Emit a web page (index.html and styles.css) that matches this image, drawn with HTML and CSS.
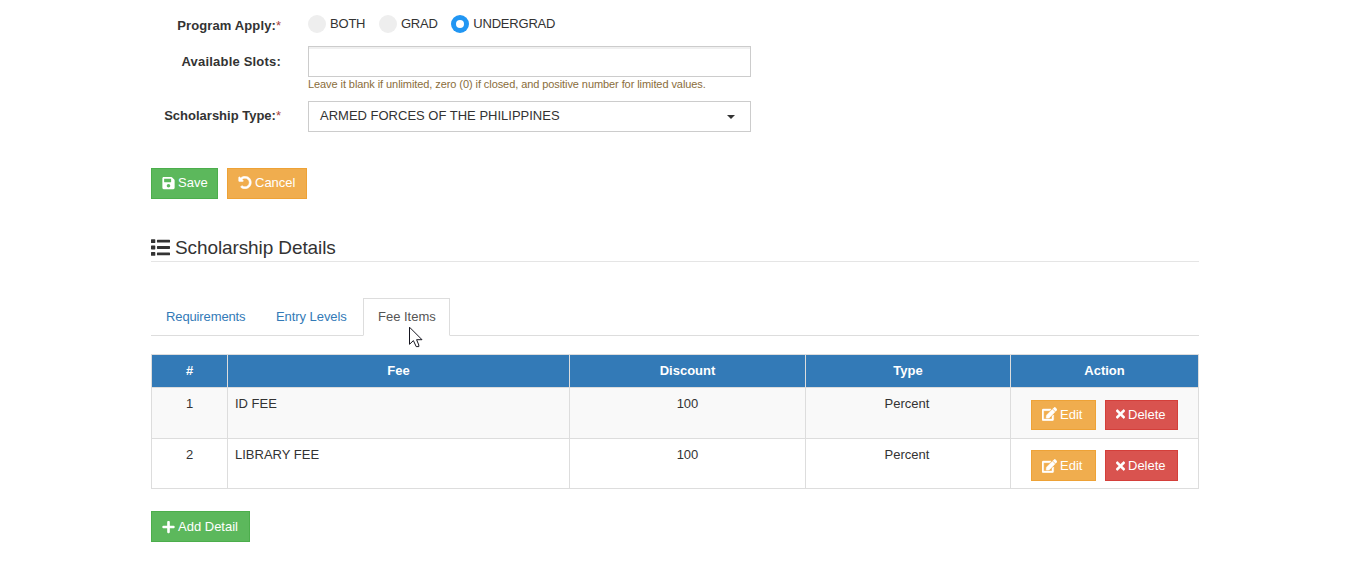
FILE: index.html
```html
<!DOCTYPE html>
<html lang="en">
<head>
  <meta charset="UTF-8" />
  <meta name="viewport" content="width=device-width, initial-scale=1" />
  <title>Scholarship Details</title>
  <link rel="stylesheet" href="styles.css">
</head>
<body>
  <!-- Icons -->
  <svg class="icon-defs">
    <symbol id="i-save" viewBox="0 0 448 512"><path d="M433.941 129.941l-83.882-83.882A48 48 0 0 0 316.118 32H48C21.49 32 0 53.49 0 80v352c0 26.51 21.49 48 48 48h352c26.51 0 48-21.49 48-48V163.882a48 48 0 0 0-14.059-33.941zM224 416c-35.346 0-64-28.654-64-64 0-35.346 28.654-64 64-64s64 28.654 64 64c0 35.346-28.654 64-64 64zm96-304.52V212c0 6.627-5.373 12-12 12H76c-6.627 0-12-5.373-12-12V108c0-6.627 5.373-12 12-12h228.52c3.183 0 6.235 1.264 8.485 3.515l3.48 3.48A11.996 11.996 0 0 1 320 111.48z"/></symbol>
    <symbol id="i-undo" viewBox="0 0 512 512"><path d="M255.545 8c-66.269.119-126.438 26.233-170.86 68.685L48.971 40.971C33.851 25.851 8 36.559 8 57.941V192c0 13.255 10.745 24 24 24h134.059c21.382 0 32.09-25.851 16.971-40.971l-41.75-41.75c30.864-28.899 70.801-44.907 113.23-45.273 92.398-.798 170.283 73.977 169.484 169.442C423.236 348.009 349.816 424 256 424c-41.127 0-79.997-14.678-110.63-41.556-4.743-4.161-11.906-3.908-16.368.553L89.34 422.659c-4.872 4.872-4.631 12.815.482 17.433C133.798 479.813 192.074 504 256 504c136.966 0 247.999-111.033 248-247.998C504.001 119.193 392.354 7.755 255.545 8z"/></symbol>
    <symbol id="i-list" viewBox="0 0 512 512"><path d="M16 32h84q16 0 16 16v72q0 16-16 16H16q-16 0-16-16V48q0-16 16-16zM16 204h84q16 0 16 16v72q0 16-16 16H16q-16 0-16-16v-72q0-16 16-16zM16 376h84q16 0 16 16v72q0 16-16 16H16q-16 0-16-16v-72q0-16 16-16zM176 46h320q16 0 16 16v44q0 16-16 16H176q-16 0-16-16V62q0-16 16-16zM176 218h320q16 0 16 16v44q0 16-16 16H176q-16 0-16-16v-44q0-16 16-16zM176 390h320q16 0 16 16v44q0 16-16 16H176q-16 0-16-16v-44q0-16 16-16z"/></symbol>
    <symbol id="i-edit" viewBox="0 0 576 512"><path d="M402.6 83.2l90.2 90.2c3.8 3.8 3.8 10 0 13.8L274.4 405.6l-92.8 10.3c-12.4 1.4-22.9-9.1-21.5-21.5l10.3-92.8L388.8 83.2c3.8-3.8 10-3.8 13.8 0zm162-22.9l-48.8-48.8c-15.2-15.2-39.9-15.2-55.2 0l-35.4 35.4c-3.8 3.8-3.8 10 0 13.8l90.2 90.2c3.8 3.8 10 3.8 13.8 0l35.4-35.4c15.2-15.3 15.2-40 0-55.2zM384 346.2V448H64V128h229.8c3.2 0 6.2-1.3 8.5-3.5l40-40c7.6-7.6 2.2-20.5-8.5-20.5H48C21.5 64 0 85.5 0 112v352c0 26.5 21.5 48 48 48h352c26.5 0 48-21.5 48-48V306.2c0-10.7-12.9-16-20.5-8.5l-40 40c-2.2 2.3-3.5 5.3-3.5 8.5z"/></symbol>
    <symbol id="i-times" viewBox="0 0 352 512"><path d="M242.72 256l100.07-100.07c12.28-12.28 12.28-32.19 0-44.48l-22.24-22.24c-12.28-12.28-32.19-12.28-44.48 0L176 189.28 75.93 89.21c-12.28-12.28-32.19-12.28-44.48 0L9.21 111.45c-12.28 12.28-12.28 32.19 0 44.48L109.28 256 9.21 356.07c-12.28 12.28-12.28 32.19 0 44.48l22.24 22.24c12.28 12.28 32.2 12.28 44.48 0L176 322.72l100.07 100.07c12.28 12.28 32.2 12.28 44.48 0l22.24-22.24c12.28-12.28 12.28-32.19 0-44.48L242.72 256z"/></symbol>
    <symbol id="i-plus" viewBox="0 0 448 512"><path d="M416 208H272V64c0-17.67-14.33-32-32-32h-32c-17.67 0-32 14.33-32 32v144H32c-17.67 0-32 14.33-32 32v32c0 17.67 14.33 32 32 32h144v144c0 17.67 14.33 32 32 32h32c17.67 0 32-14.33 32-32V304h144c17.67 0 32-14.33 32-32v-32c0-17.67-14.33-32-32-32z"/></symbol>
  </svg>

  <div class="container">
    <form class="form">
      <div class="form-group radios">
        <label class="control-label">Program Apply:<span class="required">*</span></label>
        <div class="field radio-list">
          <label class="radio"><span class="checkmark"></span><span>BOTH</span></label>
          <label class="radio"><span class="checkmark"></span><span>GRAD</span></label>
          <label class="radio"><span class="checkmark checked"></span><span>UNDERGRAD</span></label>
        </div>
      </div>
      <div class="form-group slots">
        <label class="control-label" for="slots">Available Slots:</label>
        <div class="field">
          <input type="text" id="slots" class="form-control">
          <div class="help">Leave it blank if unlimited, zero (0) if closed, and positive number for limited values.</div>
        </div>
      </div>
      <div class="form-group type">
        <label class="control-label">Scholarship Type:<span class="required">*</span></label>
        <div class="field">
          <div class="select"><span>ARMED FORCES OF THE PHILIPPINES</span><span class="caret"></span></div>
        </div>
      </div>
      <div class="buttons">
        <button type="button" class="btn btn-success btn-save"><svg class="icon icon-save"><use href="#i-save"/></svg>Save</button>
        <button type="button" class="btn btn-warning btn-cancel"><svg class="icon icon-undo"><use href="#i-undo"/></svg>Cancel</button>
      </div>
    </form>

    <h2><svg class="icon-list"><use href="#i-list"/></svg>Scholarship Details</h2>

    <ul class="tabs">
      <li class="tab-req"><a>Requirements</a></li>
      <li class="tab-entry"><a>Entry Levels</a></li>
      <li class="tab-fee active"><a>Fee Items</a>
        <svg class="pointer" viewBox="0 0 15 22"><path d="M1.5 1.2V18.3L5.4 14.6L8.2 20.6H10.8V19L8.6 13.7H14Z"/></svg>
      </li>
    </ul>

    <table class="table">
      <colgroup><col class="c-num"><col class="c-fee"><col class="c-discount"><col class="c-type"><col class="c-action"></colgroup>
      <thead>
        <tr><th>#</th><th>Fee</th><th>Discount</th><th>Type</th><th>Action</th></tr>
      </thead>
      <tbody>
        <tr>
          <td>1</td>
          <td class="left">ID FEE</td>
          <td>100</td>
          <td class="kind">Percent</td>
          <td class="action">
            <div class="action-buttons">
              <button class="btn btn-warning btn-edit"><svg class="icon icon-edit"><use href="#i-edit"/></svg>Edit</button>
              <button class="btn btn-danger btn-delete"><svg class="icon icon-times"><use href="#i-times"/></svg>Delete</button>
            </div>
          </td>
        </tr>
        <tr>
          <td>2</td>
          <td class="left">LIBRARY FEE</td>
          <td>100</td>
          <td class="kind">Percent</td>
          <td class="action">
            <div class="action-buttons">
              <button class="btn btn-warning btn-edit"><svg class="icon icon-edit"><use href="#i-edit"/></svg>Edit</button>
              <button class="btn btn-danger btn-delete"><svg class="icon icon-times"><use href="#i-times"/></svg>Delete</button>
            </div>
          </td>
        </tr>
      </tbody>
    </table>

    <button class="btn btn-success btn-add"><svg class="icon icon-plus"><use href="#i-plus"/></svg>Add Detail</button>
  </div>
</body>
</html>
```
FILE: styles.css
```css
* {
  box-sizing: border-box;
}

body {
  margin: 0;
  font-family: "Liberation Sans", Arial, sans-serif;
  font-size: 13px;
  line-height: 18px;
  color: #333;
  background: #fff;
  overflow: hidden;
}

.icon-defs {
  display: none;
}

.container {
  width: 1048px;
  margin-left: 151px;
  padding-top: 8px;
}

/* Form */
.form-group {
  display: flex;
}

.radios {
  height: 38px;
}

.slots {
  height: 55px;
}

.type {
  height: 31px;
}

.control-label {
  width: 130px;
  margin-right: 27px;
  padding-top: 6px;
  text-align: right;
  font-weight: bold;
}

.radios .control-label {
  padding-top: 9px;
  letter-spacing: 0.12px;
}

.slots .control-label {
  padding-top: 7px;
  letter-spacing: 0.2px;
}

.required {
  color: #a94442;
  font-weight: normal;
  letter-spacing: 0;
}

.field {
  width: 443px;
}

.radio-list {
  display: flex;
  padding-top: 7px;
  letter-spacing: -0.2px;
}

.radio {
  display: flex;
  gap: 4px;
  height: 18px;
  line-height: 17px;
  margin-right: 13.6px;
}

.checkmark {
  width: 18px;
  height: 18px;
  border-radius: 50%;
  background: #eee;
}

.checkmark.checked {
  background: #2196f3;
  display: flex;
  align-items: center;
  justify-content: center;
}

.checkmark.checked::after {
  content: "";
  width: 8px;
  height: 8px;
  border-radius: 50%;
  background: #fff;
}

.form-control {
  display: block;
  width: 443px;
  height: 31px;
  border: 1px solid #ccc;
  border-radius: 0;
  box-shadow: inset 0 2px 0 rgba(0, 0, 0, 0.06);
  outline: none;
}

.help {
  font-size: 11px;
  line-height: 15px;
  color: #8a6d3b;
  letter-spacing: -0.08px;
  white-space: nowrap;
}

.select {
  display: flex;
  align-items: center;
  justify-content: space-between;
  height: 31px;
  padding: 0 15px 2px 11px;
  border: 1px solid #ccc;
}

.caret {
  margin-top: 2px;
  border-top: 4px solid #333;
  border-left: 4px solid transparent;
  border-right: 4px solid transparent;
}

/* Buttons */
.btn {
  display: flex;
  align-items: center;
  gap: 3px;
  height: 31px;
  padding: 0 0 2px 10px;
  border: 1px solid;
  border-radius: 0;
  font-family: inherit;
  font-size: 13px;
  color: #fff;
  white-space: nowrap;
}

.btn-success {
  background: #5cb85c;
  border-color: #4cae4c;
}

.btn-warning {
  background: #f0ad4e;
  border-color: #eea236;
}

.btn-danger {
  background: #d9534f;
  border-color: #d43f3a;
}

.icon {
  height: 13px;
  fill: currentColor;
  flex: none;
}

.icon-save {
  width: 13px;
  height: 14px;
}

.icon-undo {
  width: 14px;
  height: 13px;
  stroke: currentColor;
  stroke-width: 20;
}

.icon-edit {
  width: 15px;
  height: 14px;
  stroke: currentColor;
  stroke-width: 16;
}

.icon-times {
  width: 9px;
  height: 14px;
  stroke: currentColor;
  stroke-width: 14;
}

.icon-plus {
  width: 13px;
  height: 14px;
}

.buttons {
  display: flex;
  gap: 9px;
  margin-top: 36px;
}

.btn-save { width: 67px; }
.btn-cancel { width: 80px; }
.btn-edit { width: 65px; }
.btn-delete { width: 73px; }
.btn-add { width: 99px; padding-bottom: 0; }

/* Heading */
h2 {
  display: flex;
  align-items: center;
  gap: 5px;
  height: 30px;
  margin: 33px 0 36px;
  padding-top: 2px;
  border-bottom: 1px solid #e5e5e5;
  font-size: 19px;
  font-weight: normal;
  letter-spacing: -0.1px;
}

.icon-list {
  width: 19px;
  height: 19px;
  margin-bottom: 1px;
  fill: #333;
}

/* Tabs */
.tabs {
  display: flex;
  height: 38px;
  margin: 0 0 18px;
  padding: 0;
  border-bottom: 1px solid #ddd;
  list-style: none;
}

.tabs li {
  position: relative;
  height: 38px;
  padding: 9px 0 0 14px;
  border: 1px solid transparent;
  color: #337ab7;
  white-space: nowrap;
}

.tab-req {
  width: 110px;
  letter-spacing: -0.12px;
}

.tab-entry {
  width: 102px;
  letter-spacing: -0.06px;
}

.tab-fee {
  width: 87px;
}

.tabs .active {
  color: #555;
  background: #fff;
  border-color: #ddd;
  border-bottom-color: #fff;
}

.pointer {
  position: absolute;
  left: 44px;
  top: 27px;
  width: 15px;
  height: 22px;
  fill: #fff;
  stroke: #15151f;
  stroke-width: 1;
}

/* Table */
.table {
  width: 1048px;
  border-collapse: collapse;
  table-layout: fixed;
  margin-bottom: 22px;
}

.c-num { width: 76px; }
.c-fee { width: 342px; }
.c-discount { width: 236px; }
.c-type { width: 205px; }
.c-action { width: 188px; }

.table th,
.table td {
  border: 1px solid #ddd;
  padding: 7px;
  text-align: center;
  vertical-align: top;
}

.table th {
  height: 33px;
  background: #337ab7;
  color: #fff;
}

.table td {
  height: 51px;
}

.table td.left {
  text-align: left;
}

.table td.kind {
  padding-right: 9px;
}

.table tbody tr:first-child {
  background: #f9f9f9;
}

.table tbody tr:last-child td {
  height: 50px;
}

.table td.action {
  padding: 12px 0 7px;
}

.table tbody tr:last-child td.action {
  padding: 11px 0 7px;
}

.table tbody tr:first-child .btn {
  height: 30px;
}

.table tbody tr:last-child .btn {
  padding-bottom: 0;
}

.action-buttons {
  display: flex;
  justify-content: center;
  gap: 9px;
}
```
